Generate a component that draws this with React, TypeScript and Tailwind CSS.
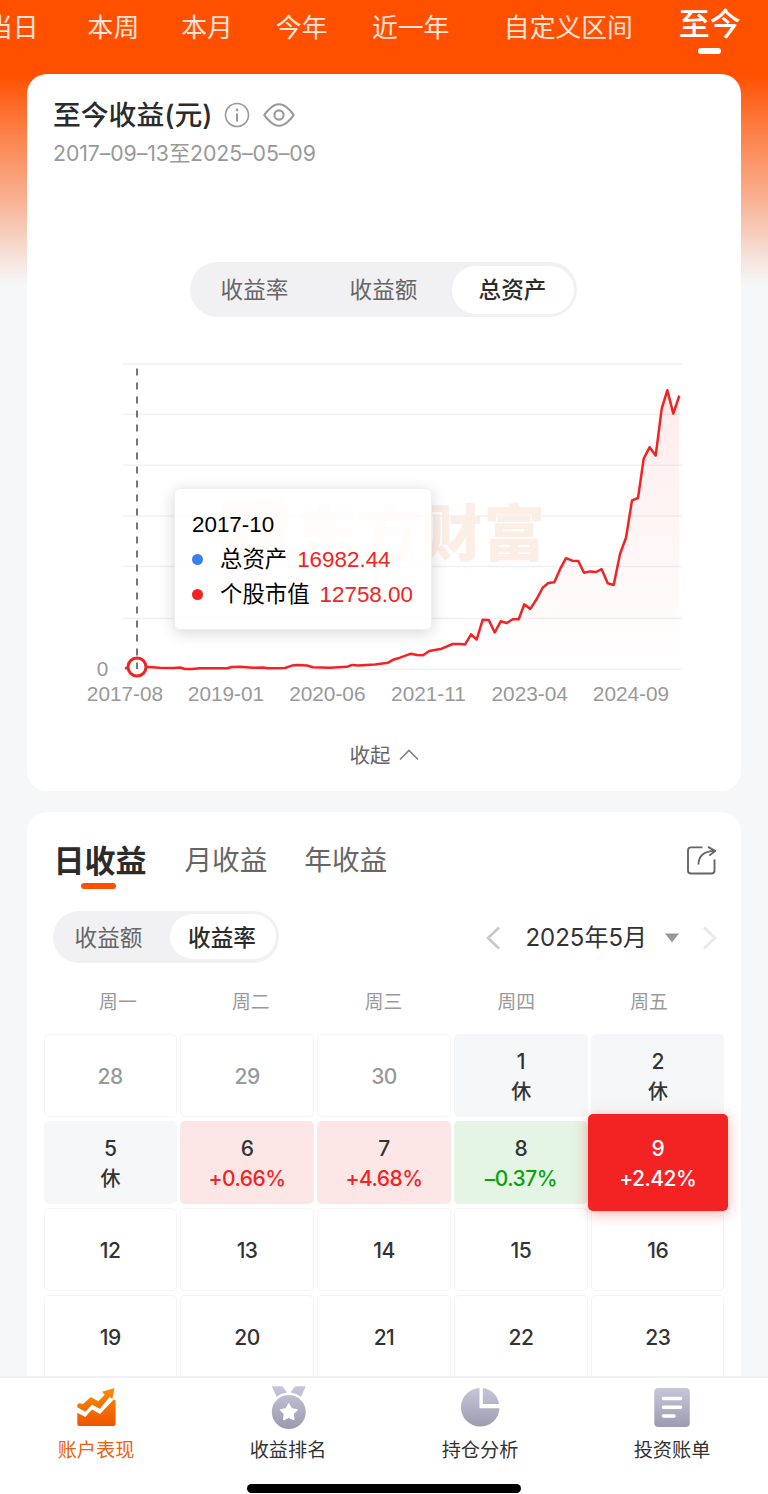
import clsx from 'clsx';

const cjk = "font-['Inter','Noto_Sans_CJK_SC',sans-serif]";
const arial = "font-['Liberation_Sans','Noto_Sans_CJK_SC',sans-serif]";

const periods = [
    {label: '当日', className: '-ml-[13px]'},
    {label: '本周', className: 'ml-[49px]'},
    {label: '本月', className: 'ml-[42px]'},
    {label: '今年', className: 'ml-[43px]'},
    {label: '近一年', className: 'ml-[44.5px]'},
    {label: '自定义区间', className: 'ml-[54.5px]'},
];

const assets: [number, number][] = [
    [125, 668.3], [137, 667], [148, 667], [160, 667.7], [174, 668], [180, 667.5], [185, 669], [192, 669],
    [200, 668.3], [227, 668.3], [232, 667], [240, 666.7], [253, 667.7], [263, 667.4], [268, 668.3], [285, 668],
    [292, 665.6], [298, 664.9], [307, 665.5], [313, 667.2], [330, 667.7], [347, 666.8], [352, 664.9], [358, 665.4],
    [375, 664.4], [388, 662.7], [393, 659.8], [400, 657.7], [411, 653.7], [417, 655], [423, 655.3], [429.3, 651],
    [441.7, 648.7], [452.7, 644], [460, 644], [465, 644.6], [471, 634.3], [476.7, 639.5], [482.7, 619.7],
    [488.7, 619.9], [494.7, 632.5], [500.7, 621.3], [506.7, 623], [512.7, 619.3], [518.7, 619.3], [524.3, 604.3],
    [530.3, 608.9], [536.7, 599], [542.7, 587.7], [548.3, 583], [554.3, 582.3], [560.3, 568.7], [566, 558.2],
    [572.3, 560.7], [578.3, 561], [584, 572.8], [590, 571.4], [596, 572], [601.7, 569.2], [607.7, 583.2],
    [613.7, 585], [620, 554], [626, 537.7], [632, 500.3], [638, 498], [643.7, 458.7], [649.7, 447.2],
    [655.7, 455.5], [661.7, 408.7], [667.3, 390.3], [673.3, 413.6], [679.3, 395.7],
];

const linePoints = assets.map(([x, y]) => `${x},${y}`).join(' ');

const gridLines = [364, 414.5, 465.2, 515.8, 566.5, 618.5, 669.3];

const months = [
    {label: '2017-08', x: 125},
    {label: '2019-01', x: 226},
    {label: '2020-06', x: 327.3},
    {label: '2021-11', x: 428.5},
    {label: '2023-04', x: 529.7},
    {label: '2024-09', x: 631},
];

type Kind = 'out' | 'rest' | 'up' | 'down' | 'active' | 'plain';

interface Day {
    day: number;
    kind: Kind;
    note?: string;
}

const days: Day[] = [
    {day: 28, kind: 'out'},
    {day: 29, kind: 'out'},
    {day: 30, kind: 'out'},
    {day: 1, kind: 'rest', note: '休'},
    {day: 2, kind: 'rest', note: '休'},
    {day: 5, kind: 'rest', note: '休'},
    {day: 6, kind: 'up', note: '+0.66%'},
    {day: 7, kind: 'up', note: '+4.68%'},
    {day: 8, kind: 'down', note: '–0.37%'},
    {day: 9, kind: 'active', note: '+2.42%'},
    {day: 12, kind: 'plain'},
    {day: 13, kind: 'plain'},
    {day: 14, kind: 'plain'},
    {day: 15, kind: 'plain'},
    {day: 16, kind: 'plain'},
    {day: 19, kind: 'plain'},
    {day: 20, kind: 'plain'},
    {day: 21, kind: 'plain'},
    {day: 22, kind: 'plain'},
    {day: 23, kind: 'plain'},
];

const cellStyles: Record<Kind, string> = {
    out: 'border border-[#f5f5f6] text-[#999]',
    rest: 'bg-[#f6f7f9] text-[#333]',
    up: 'bg-[#fde6e6] text-[#333]',
    down: 'bg-[#e4f4e5] text-[#333]',
    active: 'relative z-10 -mx-[3.5px] -my-[7px] bg-[#f32323] text-white shadow-[0_3px_14px_rgba(243,35,35,0.35)]',
    plain: 'border border-[#f5f5f6] text-[#333]',
};

const noteStyles: Record<Kind, string> = {
    out: '',
    rest: 'text-[20px]',
    up: 'text-[#f32323]',
    down: 'text-[#0aa30a]',
    active: 'text-white',
    plain: '',
};

function PeriodTabs() {
    return (
        <header className="h-[74px] flex items-start whitespace-nowrap text-[25.8px] text-white/85">
            {periods.map((p) => (
                <span key={p.label} className={clsx('shrink-0 leading-[56px]', p.className)}>
                    {p.label}
                </span>
            ))}
            <div className="ml-[46px] shrink-0 flex flex-col items-center text-white">
                <span className="text-[31px] leading-[48px] font-medium">至今</span>
                <span className="w-[23px] h-[5.5px] rounded-full bg-white" />
            </div>
        </header>
    );
}

function AssetChart() {
    return (
        <div className="relative mt-[33px] h-[365px]">
            <svg width="714" height="365" viewBox="27 350 714 365" className="block">
                <defs>
                    <linearGradient id="area" x1="0" y1="390" x2="0" y2="669" gradientUnits="userSpaceOnUse">
                        <stop offset="0" stopColor="#f32323" stopOpacity="0.09" />
                        <stop offset="1" stopColor="#f32323" stopOpacity="0" />
                    </linearGradient>
                </defs>
                <g fill="#fdeee5">
                    <path
                        fillRule="evenodd"
                        d="M230 500h49q8 0 8 8v44q0 8-8 8h-49q-8 0-8-8v-44q0-8 8-8zM254 520q10-5 12-14 3 5 2 10l7-4q-1 16-14 26-10 8-20 14 13-18 13-32z"
                    />
                    <text x="296" y="556" fontSize="61.5" letterSpacing="1" fontWeight="900" className={cjk}>东方财富</text>
                </g>
                {gridLines.map((y) => (
                    <line key={y} x1="123" x2="682" y1={y} y2={y} stroke="#eff0f4" strokeWidth="1.3" />
                ))}
                <polygon points={`125,669.3 ${linePoints} 679.3,669.3`} fill="url(#area)" />
                <line x1="137" x2="137" y1="368.5" y2="656" stroke="#555" strokeWidth="1.6" strokeDasharray="7 7" />
                <polyline points={linePoints} fill="none" stroke="#f32323" strokeWidth="2.5" strokeLinejoin="round" />
                <circle cx="137" cy="667" r="9" fill="#fff" stroke="#f32323" strokeWidth="3" />
                <line x1="137" x2="137" y1="662.5" y2="669" stroke="#555" strokeWidth="1.6" />
                <g fill="#999" fontSize="20.8" textAnchor="middle" className={arial}>
                    <text x="102.5" y="676">0</text>
                    {months.map((m) => (
                        <text key={m.label} x={m.x} y="700.5">{m.label}</text>
                    ))}
                </g>
            </svg>
            <div
                className={clsx(
                    'absolute left-[147px] top-[138px] w-[258px] h-[142px] pt-[18px] pl-[17px] rounded-[6px] bg-white/80 border border-[#efefef] text-[22.4px] text-black shadow-[0_3px_16px_rgba(0,0,0,0.16)]',
                    arial,
                )}
            >
                <div className="h-[35px] leading-[35px]">2017-10</div>
                <div className="h-[35px] flex items-center leading-[35px]">
                    <span className="w-[11px] h-[11px] rounded-full bg-[#3a7eef]" />
                    <span className="ml-[17px]">总资产</span>
                    <span className="ml-[10px] text-[#f32323]">16982.44</span>
                </div>
                <div className="h-[35px] flex items-center leading-[35px]">
                    <span className="w-[11px] h-[11px] rounded-full bg-[#f32323]" />
                    <span className="ml-[17px]">个股市值</span>
                    <span className="ml-[10px] text-[#f32323]">12758.00</span>
                </div>
            </div>
        </div>
    );
}

function SummaryCard() {
    return (
        <section className="h-[717px] mx-[27px] rounded-[20px] bg-white flex flex-col">
            <div className="mt-[21px] ml-[26px] h-10 flex items-center">
                <h1 className="text-[27.8px] leading-10 font-medium text-[#2b2b2b]">至今收益(元)</h1>
                <svg width="26" height="26" viewBox="0 0 26 26" fill="none" className="ml-[12px]">
                    <circle cx="13" cy="13" r="11.5" stroke="#999" strokeWidth="1.6" />
                    <circle cx="13" cy="7.9" r="1.3" fill="#999" />
                    <path d="M13 11.4v8.2" stroke="#999" strokeWidth="2" />
                </svg>
                <svg width="32" height="24" viewBox="0 0 32 24" fill="none" stroke="#999" strokeWidth="2.1" className="ml-[13px]">
                    <path d="M1.3 12Q3 9 7 5.5Q11.5 1.3 16 1.3T25 5.5Q29 9 30.7 12Q29 15 25 18.5Q20.5 22.7 16 22.7T7 18.5Q3 15 1.3 12Z" />
                    <circle cx="16" cy="12" r="4.6" />
                </svg>
            </div>
            <p className="ml-[26px] mt-[3px] h-[30px] leading-[31px] text-[21.3px] text-[#999] whitespace-nowrap tracking-[-0.1px]">
                2017–09–13至2025–05–09
            </p>
            <div className="mt-[94px] ml-[163px] w-[387px] h-[55px] p-[3.5px] rounded-full bg-[#f1f1f4] flex items-center text-[22.6px] text-[#666]">
                <span className="w-[122px] pt-px text-center">收益率</span>
                <span className="w-[136px] pt-px text-center">收益额</span>
                <span className="flex-1 h-full pt-px rounded-full bg-white text-[#2b2b2b] font-medium flex items-center justify-center">
                    总资产
                </span>
            </div>
            <AssetChart />
            <div className="mt-[26px] h-[30px] flex items-center justify-center gap-2 text-[20.5px] text-[#666]">
                收起
                <svg width="20" height="12" viewBox="0 0 20 12" fill="none" stroke="#808080" strokeWidth="1.6" className="-mt-[3px]">
                    <path d="M1 10.5L10 1.5L19 10.5" />
                </svg>
            </div>
        </section>
    );
}

function CalendarCard() {
    return (
        <section className="mt-[21px] mx-[27px] h-[700px] rounded-t-[20px] bg-white">
            <div className="pt-[26px] pl-[26.5px] pr-[25px] flex items-start text-[27.6px] text-[#666] whitespace-nowrap">
                <div className="flex flex-col items-center">
                    <span className="text-[31px] leading-[45px] font-bold text-[#2b2b2b]">日收益</span>
                    <span className="mr-[3px] w-[35px] h-[5.5px] rounded-full bg-[#ff5000]" />
                </div>
                <span className="ml-[38px] leading-[44px]">月收益</span>
                <span className="ml-[37px] leading-[44px]">年收益</span>
                <svg width="30" height="30" viewBox="0 0 30 30" fill="none" stroke="#666" strokeWidth="1.9" className="ml-auto mt-[7px]">
                    <path d="M16.5 2.4H5Q2 2.400 2 5.400V25.500Q2 28.500 5 28.500H25.500Q28.500 28.500 28.500 25.500V14.500" />
                    <path d="M12.500 19.500Q12.500 6.500 28.500 5.900M22 1.800L29.300 5.900L23.300 10.500" />
                </svg>
            </div>
            <div className="mt-[22px] pl-[26px] pr-[24px] flex items-center">
                <div className="w-[226px] h-[52px] p-[3.5px] rounded-full bg-[#f1f1f4] flex items-center text-[22.6px] text-[#666]">
                    <span className="w-[113px] pt-0.5 text-center pr-[9px]">收益额</span>
                    <span className="flex-1 h-full pt-0.5 pr-px rounded-full bg-white text-[#2b2b2b] font-medium flex items-center justify-center">
                        收益率
                    </span>
                </div>
                <svg width="14" height="24" viewBox="0 0 14 24" fill="none" stroke="#c8c8c8" strokeWidth="2.6" className="ml-auto mt-0.5">
                    <path d="M13 1.5L2 12L13 22.5" />
                </svg>
                <span className="ml-[25px] pt-[3px] text-[24px] leading-[36px] text-[#333] whitespace-nowrap">2025年5月</span>
                <svg width="14" height="10" viewBox="0 0 14 10" className="ml-[18px] mt-0.5">
                    <path d="M0 0.5H14L7 9.5Z" fill="#999" />
                </svg>
                <svg width="14" height="24" viewBox="0 0 14 24" fill="none" stroke="#e8e8e8" strokeWidth="2.6" className="ml-[24px] mt-0.5">
                    <path d="M1 1.5L12 12L1 22.5" />
                </svg>
            </div>
            <div className="mt-[26px] ml-[24.5px] mr-[25.5px] h-[30px] grid grid-cols-5 items-center text-center text-[18.8px] text-[#999]">
                <span>周一</span>
                <span>周二</span>
                <span>周三</span>
                <span>周四</span>
                <span>周五</span>
            </div>
            <div className="mt-[15px] mx-[16.5px] grid grid-cols-5 auto-rows-[83.5px] gap-x-[3.5px] gap-y-[3.7px] text-[21px] font-medium tracking-[-0.5px]">
                {days.map((d) => (
                    <div
                        key={d.day}
                        className={clsx('pt-[3px] rounded-[5px] flex flex-col items-center justify-center', cellStyles[d.kind])}
                    >
                        <span className="leading-[30px]">{d.day}</span>
                        {d.note && <span className={clsx('leading-[30px]', noteStyles[d.kind])}>{d.note}</span>}
                    </div>
                ))}
            </div>
        </section>
    );
}

function BottomNav() {
    return (
        <nav className="h-[118px] shrink-0 border-t-2 border-[#f0f1f3] bg-white flex flex-col items-center text-[19.2px] text-[#333]">
            <svg width="0" height="0" className="absolute">
                <defs>
                    <linearGradient id="orange" x1="0" y1="0" x2="0" y2="40" gradientUnits="userSpaceOnUse">
                        <stop offset="0" stopColor="#fa9000" />
                        <stop offset="1" stopColor="#ee5500" />
                    </linearGradient>
                    <linearGradient id="mauve" x1="0" y1="0" x2="0" y2="42" gradientUnits="userSpaceOnUse">
                        <stop offset="0" stopColor="#c9c7dc" />
                        <stop offset="1" stopColor="#9c9aaf" />
                    </linearGradient>
                </defs>
            </svg>
            <div className="w-full grid grid-cols-4 pt-[8px]">
                <div className="flex flex-col items-center text-[#f06010]">
                    <svg width="40" height="44" viewBox="0 0 40 44" fill="url(#orange)">
                        <path d="M1.300 18.500Q4 16 6.700 18.300L14 11.700Q15 11 16 11.700L22.300 15.300L28.700 8.700L26 5.700L38.500 2L36.300 13.300L33.700 10.700L24 22.700L16 18.700L9.300 25.700L1.300 21.300Z" />
                        <path d="M1.300 26.700L9.300 31L16 23.500L24 28L37.300 14Q39.600 12.500 39.600 15V38Q39.600 40 37.600 40H3.300Q1.300 40 1.300 38Z" />
                    </svg>
                    <span className="mt-[5px] leading-[30px]">账户表现</span>
                </div>
                <div className="flex flex-col items-center">
                    <svg width="40" height="44" viewBox="-0.8 0 40 44">
                        <path d="M3 0.300H13.700L18.300 6.500Q12 7.500 7.800 10.800ZM37 0.300H26.300L21.700 6.500Q28 7.500 32.200 10.800Z" fill="url(#mauve)" />
                        <circle cx="20" cy="26" r="17" fill="url(#mauve)" />
                        <path
                            d="M20 17.500L22.800 22.600L28.600 23.800L24.600 28.100L25.300 33.900L20 31.500L14.700 33.900L15.400 28.100L11.400 23.800L17.200 22.600Z"
                            fill="#fff"
                            stroke="#fff"
                            strokeLinejoin="round"
                        />
                    </svg>
                    <span className="mt-[5px] leading-[30px]">收益排名</span>
                </div>
                <div className="flex flex-col items-center">
                    <svg width="40" height="44" viewBox="0 0 40 44" fill="url(#mauve)">
                        <path d="M19.500 2A19.300 19.300 0 1 0 39.500 22.300H19.500Z" />
                        <path d="M22.800 2A18.500 18.500 0 0 1 39 18H22.800Z" />
                    </svg>
                    <span className="mt-[5px] leading-[30px]">持仓分析</span>
                </div>
                <div className="flex flex-col items-center">
                    <svg width="40" height="44" viewBox="0 0 40 44">
                        <rect x="2.3" y="2" width="35.5" height="39" rx="4" fill="url(#mauve)" />
                        <path d="M11.500 12.500H28.500M11.500 21.300H28.500M11.500 30H22" stroke="#fff" strokeWidth="3.6" strokeLinecap="round" />
                    </svg>
                    <span className="mt-[5px] leading-[30px]">投资账单</span>
                </div>
            </div>
            <div className="mt-[19px] w-[274px] h-[9px] rounded-full bg-black" />
        </nav>
    );
}

export default function App() {
    return (
        <div
            className={clsx(
                'w-[768px] h-[1494px] overflow-hidden flex flex-col bg-[#f6f7f9] bg-[linear-gradient(180deg,#ff5000_0px,#ff5000_74px,#fc7f45_130px,#f9b193_200px,#f5d8cb_245px,#f6f7f9_285px)]',
                cjk,
            )}
        >
            <main className="flex-1 min-h-0 overflow-hidden">
                <PeriodTabs />
                <SummaryCard />
                <CalendarCard />
            </main>
            <BottomNav />
        </div>
    );
}
